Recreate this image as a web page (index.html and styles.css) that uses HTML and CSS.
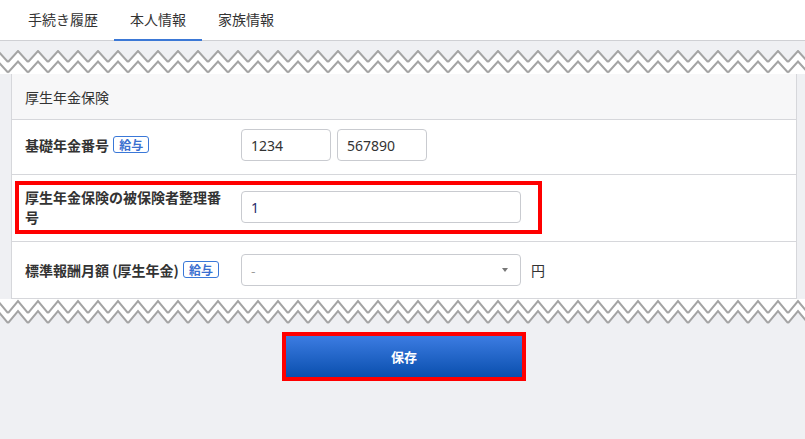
FILE: index.html
```html
<!DOCTYPE html>
<html lang="ja">
<head>
  <meta charset="UTF-8">
  <title>本人情報</title>
  <link rel="stylesheet" href="styles.css">
</head>
<body>
  <!-- タブ -->
  <nav class="tabs">
    <a class="tab">手続き履歴</a>
    <a class="tab active">本人情報</a>
    <a class="tab">家族情報</a>
  </nav>

  <svg class="zigzag zigzag-top" width="100%" height="24">
    <defs>
      <pattern id="zz-top" x="8" y="0" width="20" height="24" patternUnits="userSpaceOnUse">
        <polygon points="0,12 10,1 20,12 20,24 0,24" fill="#fff"/>
        <polyline points="0,12 10,1 20,12" fill="none" stroke="#a4a4a4" stroke-width="2"/>
        <polyline points="0,22.5 10,11.5 20,22.5" fill="none" stroke="#a4a4a4" stroke-width="2"/>
      </pattern>
    </defs>
    <rect width="100%" height="24" fill="url(#zz-top)"/>
  </svg>

  <div class="card">
    <div class="card-header">厚生年金保険</div>

    <div class="row">
      <div class="label">基礎年金番号 <span class="badge">給与</span></div>
      <div class="field">
        <input class="input short" value="1234">
        <input class="input short" value="567890">
      </div>
    </div>

    <div class="row row-marked">
      <div class="marked">
        <div class="label">厚生年金保険の被保険者整理番号</div>
        <div class="field">
          <input class="input wide value-dark" value="1">
        </div>
      </div>
    </div>

    <div class="row row-last">
      <div class="label">標準報酬月額 (厚生年金) <span class="badge">給与</span></div>
      <div class="field">
        <div class="select">
          <span class="placeholder">-</span>
          <span class="caret"></span>
        </div>
        <span class="unit">円</span>
      </div>
    </div>
  </div>

  <svg class="zigzag zigzag-bottom" width="100%" height="26">
    <defs>
      <pattern id="zz-bottom" x="8" y="0" width="20" height="26" patternUnits="userSpaceOnUse">
        <polygon points="0,0 20,0 20,24 10,12 0,24" fill="#fff"/>
        <polyline points="0,14 10,2 20,14" fill="none" stroke="#a4a4a4" stroke-width="2"/>
        <polyline points="0,24 10,12 20,24" fill="none" stroke="#a4a4a4" stroke-width="2"/>
      </pattern>
    </defs>
    <rect width="100%" height="26" fill="url(#zz-bottom)"/>
  </svg>

  <div class="actions">
    <div class="marked-button">
      <button class="save">保存</button>
    </div>
  </div>
</body>
</html>
```

FILE: styles.css
```css
body {
  margin: 0;
  background: #eff0f3;
  font-family: "Noto Sans CJK JP", "Noto Sans", sans-serif;
  color: #333;
}

.tabs {
  display: flex;
  height: 40px;
  padding-left: 12px;
  background: #fff;
  border-bottom: 1px solid #cfd0d4;
}
.tab {
  display: flex;
  align-items: center;
  padding: 0 16px 1px;
  font-size: 14px;
  color: #333;
  border-bottom: 2px solid transparent;
  margin-bottom: -1px;
}
.tab.active {
  border-bottom-color: #3b78d6;
}

.zigzag {
  display: block;
}
.zigzag-top {
  margin-top: 9px;
}

.card {
  margin: 0 8px 0 11px;
  background: #fff;
  border: 1px solid #d6d7db;
  border-top: none;
}
.card-header {
  height: 45px;
  display: flex;
  align-items: center;
  padding-left: 13px;
  background: #f7f7f8;
  border-bottom: 1px solid #d6d7db;
  font-size: 14px;
}

.row {
  display: flex;
  align-items: center;
  padding: 9px 0 13px 13px;
  border-bottom: 1px solid #d6d7db;
}
.row-marked {
  padding: 6px 0 7px 3px;
}
.row-last {
  padding: 12px 0 12px 13px;
  border-bottom: none;
}

.marked {
  display: flex;
  align-items: center;
  width: 506px;
  padding: 2px 7px 3px 6px;
  border: 4px solid #ff0000;
}

.label {
  width: 216px;
  flex-shrink: 0;
  font-size: 14px;
  font-weight: bold;
  line-height: 20px;
  padding-right: 10px;
  box-sizing: border-box;
}
.badge {
  display: inline-block;
  font-size: 12px;
  line-height: 15px;
  padding: 0 5px;
  color: #3a6fd0;
  border: 1px solid #3a78d8;
  border-radius: 3px;
  margin-left: 1px;
  vertical-align: 1px;
}

.field {
  display: flex;
  align-items: center;
  gap: 6px;
}
.input {
  height: 32px;
  box-sizing: border-box;
  border: 1px solid #c9cbd0;
  border-radius: 4px;
  padding: 0 9px;
  font-family: "Noto Sans", sans-serif;
  font-size: 14px;
  color: #333;
  background: #fff;
}
.input.short {
  width: 90px;
}
.input.wide {
  width: 280px;
}
.value-dark {
  color: #2b2b6b;
}

.select {
  position: relative;
  width: 280px;
  height: 32px;
  box-sizing: border-box;
  border: 1px solid #c9cbd0;
  border-radius: 4px;
  display: flex;
  align-items: center;
  padding-left: 9px;
}
.placeholder {
  color: #999;
  font-size: 13px;
}
.caret {
  position: absolute;
  right: 12px;
  top: 13px;
  border-left: 3px solid transparent;
  border-right: 3px solid transparent;
  border-top: 4px solid #777;
}
.unit {
  font-size: 14px;
  margin-left: 4px;
}

.actions {
  display: flex;
  justify-content: center;
  margin: 7px 8px 0 11px;
}
.marked-button {
  border: 4px solid #ff0000;
}
.save {
  display: block;
  width: 236px;
  height: 41px;
  border: none;
  background: linear-gradient(#3c7ce2, #0a4fae);
  color: #fff;
  font-family: "Noto Sans CJK JP", sans-serif;
  font-size: 13px;
  font-weight: bold;
}
```
